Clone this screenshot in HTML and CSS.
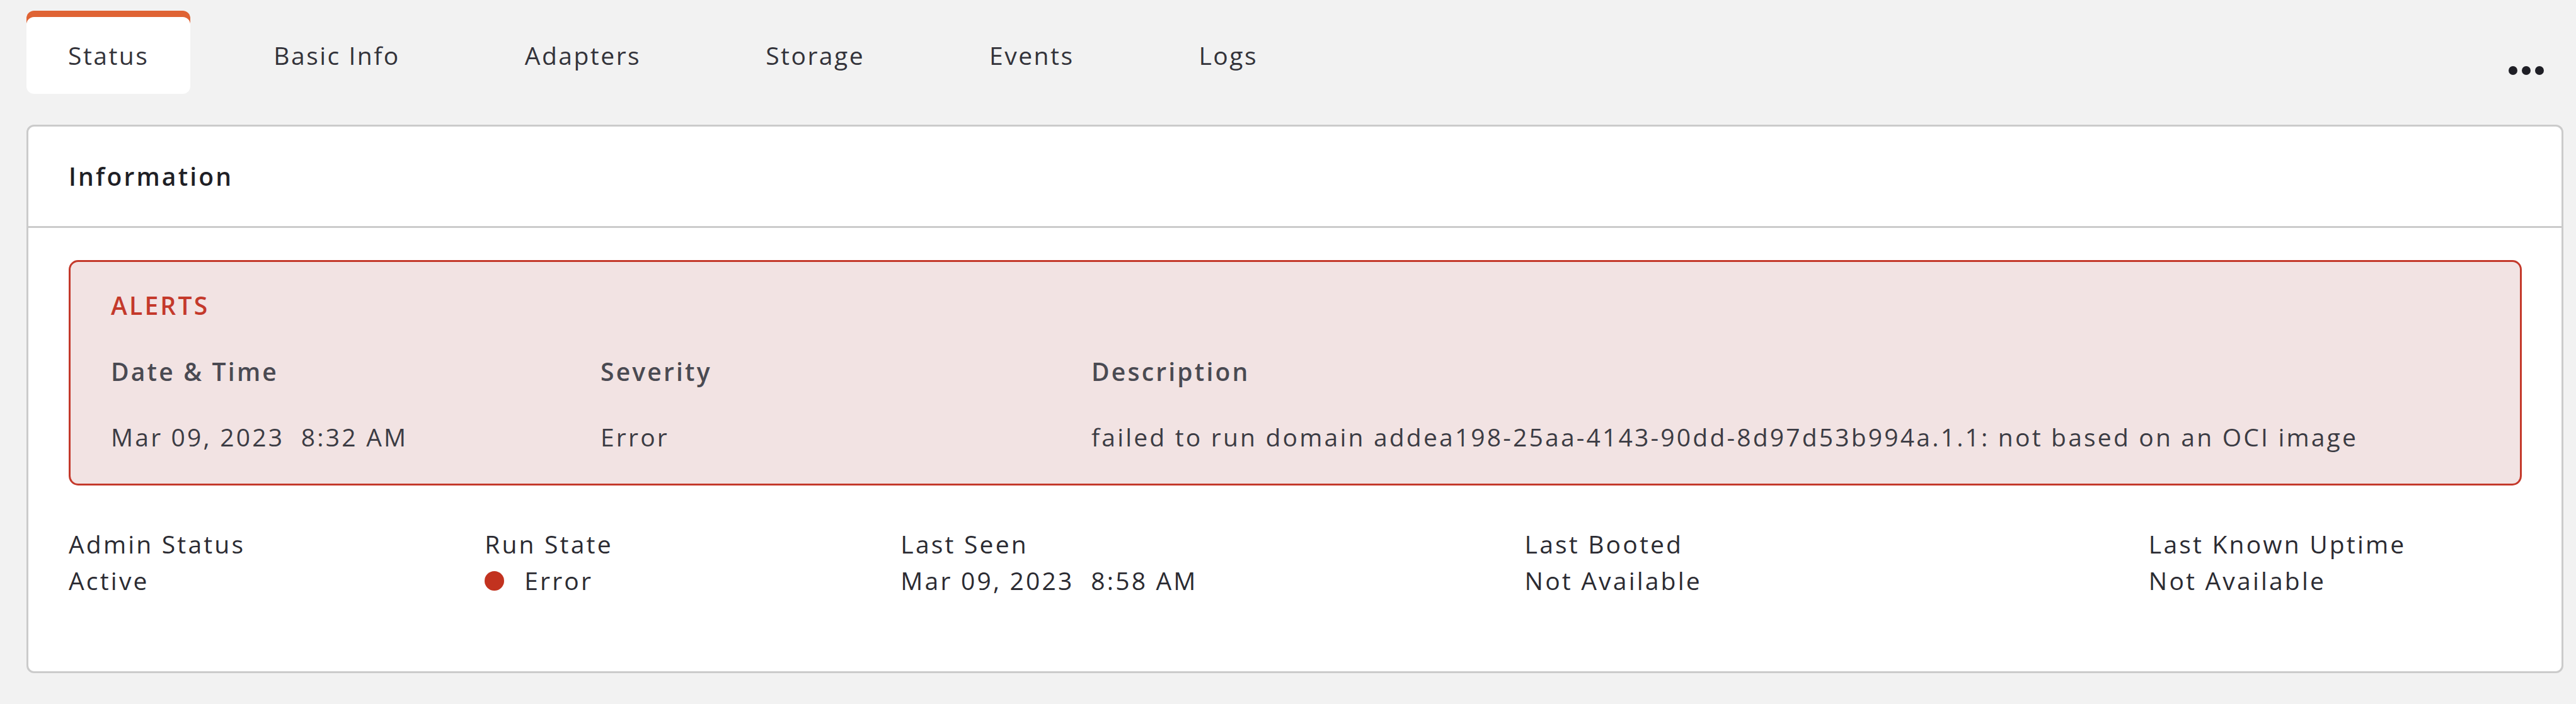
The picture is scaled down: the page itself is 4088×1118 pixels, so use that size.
FILE: index.html
```html
<!DOCTYPE html>
<html lang="en">
<head>
  <meta charset="UTF-8">
  <title>Instance Status</title>
  <link rel="stylesheet" href="styles.css">
</head>
<body>
  <div class="tabbar">
    <div class="tabs">
      <div class="tab active">Status</div>
      <div class="tab">Basic Info</div>
      <div class="tab">Adapters</div>
      <div class="tab">Storage</div>
      <div class="tab">Events</div>
      <div class="tab">Logs</div>
    </div>
    <svg class="more" width="56" height="14" viewBox="0 0 56 14">
      <circle cx="7" cy="7" r="7"/>
      <circle cx="28" cy="7" r="7"/>
      <circle cx="49" cy="7" r="7"/>
    </svg>
  </div>

  <div class="card">
    <div class="card-head">Information</div>
    <div class="card-body">
      <div class="alerts">
        <div class="alerts-title">ALERTS</div>
        <div class="alerts-grid">
          <div class="th">Date &amp; Time</div>
          <div class="th">Severity</div>
          <div class="th">Description</div>
          <div>Mar 09, 2023&nbsp; 8:32 AM</div>
          <div>Error</div>
          <div>failed to run domain addea198-25aa-4143-90dd-8d97d53b994a.1.1: not based on an OCI image</div>
        </div>
      </div>

      <div class="info">
        <div class="field span2">
          <div>Admin Status</div>
          <div>Active</div>
        </div>
        <div class="field span2">
          <div>Run State</div>
          <div class="state"><span class="dot"></span>Error</div>
        </div>
        <div class="field span3">
          <div>Last Seen</div>
          <div>Mar 09, 2023&nbsp; 8:58 AM</div>
        </div>
        <div class="field span3">
          <div>Last Booted</div>
          <div>Not Available</div>
        </div>
        <div class="field span2">
          <div>Last Known Uptime</div>
          <div>Not Available</div>
        </div>
      </div>
    </div>
  </div>
</body>
</html>
```

FILE: styles.css
```css
body {
  margin: 0;
  padding: 17px 20px 40px 42px;
  background: #f2f2f2;
  color: #2b2b32;
  font-family: "Open Sans", "Liberation Sans", sans-serif;
  font-size: 39px;
  line-height: 58.5px;
  letter-spacing: 0.082em;
}

.tabbar {
  display: flex;
  justify-content: space-between;
  align-items: flex-start;
}
.tabs {
  display: flex;
  gap: 66px;
}
.tab {
  height: 132px;
  box-sizing: border-box;
  padding: 10px 66px 0;
  display: flex;
  align-items: center;
  color: #33333a;
  letter-spacing: 0.064em;
}
.tab.active {
  background: #fff;
  border-radius: 12px;
  box-shadow: inset 0 10px 0 #df6334;
}
.more {
  margin: 88px 31px 0 0;
  fill: #1f1f26;
}

.card {
  margin-top: 49px;
  background: #fff;
  border: 3px solid #cbcbcb;
  border-radius: 12px;
}
.card-head {
  height: 158px;
  display: flex;
  align-items: center;
  padding: 0 64px;
  font-weight: 600;
  color: #1f1f26;
  border-bottom: 3px solid #cbcbcb;
}
.card-body {
  padding: 51px 63px 114px 64px;
}

.alerts {
  background: #f2e3e3;
  border: 3px solid #c4392b;
  border-radius: 15px;
  padding: 40px 64px 44px;
}
.alerts-title {
  color: #c4392b;
  font-weight: 600;
  margin-bottom: 46px;
}
.alerts-grid {
  display: grid;
  grid-template-columns: 777px 779px 1fr;
  row-gap: 46px;
  color: #3c3c44;
}
.alerts-grid .th {
  font-weight: 600;
  color: #4a4a52;
}

.info {
  margin-top: 64px;
  display: grid;
  grid-template-columns: repeat(12, 1fr);
  column-gap: 68px;
}
.span2 { grid-column: span 2; }
.span3 { grid-column: span 3; }
.state {
  display: flex;
  align-items: center;
}
.dot {
  width: 31px;
  height: 31px;
  border-radius: 50%;
  background: #c2321f;
  margin-right: 32px;
}
```
